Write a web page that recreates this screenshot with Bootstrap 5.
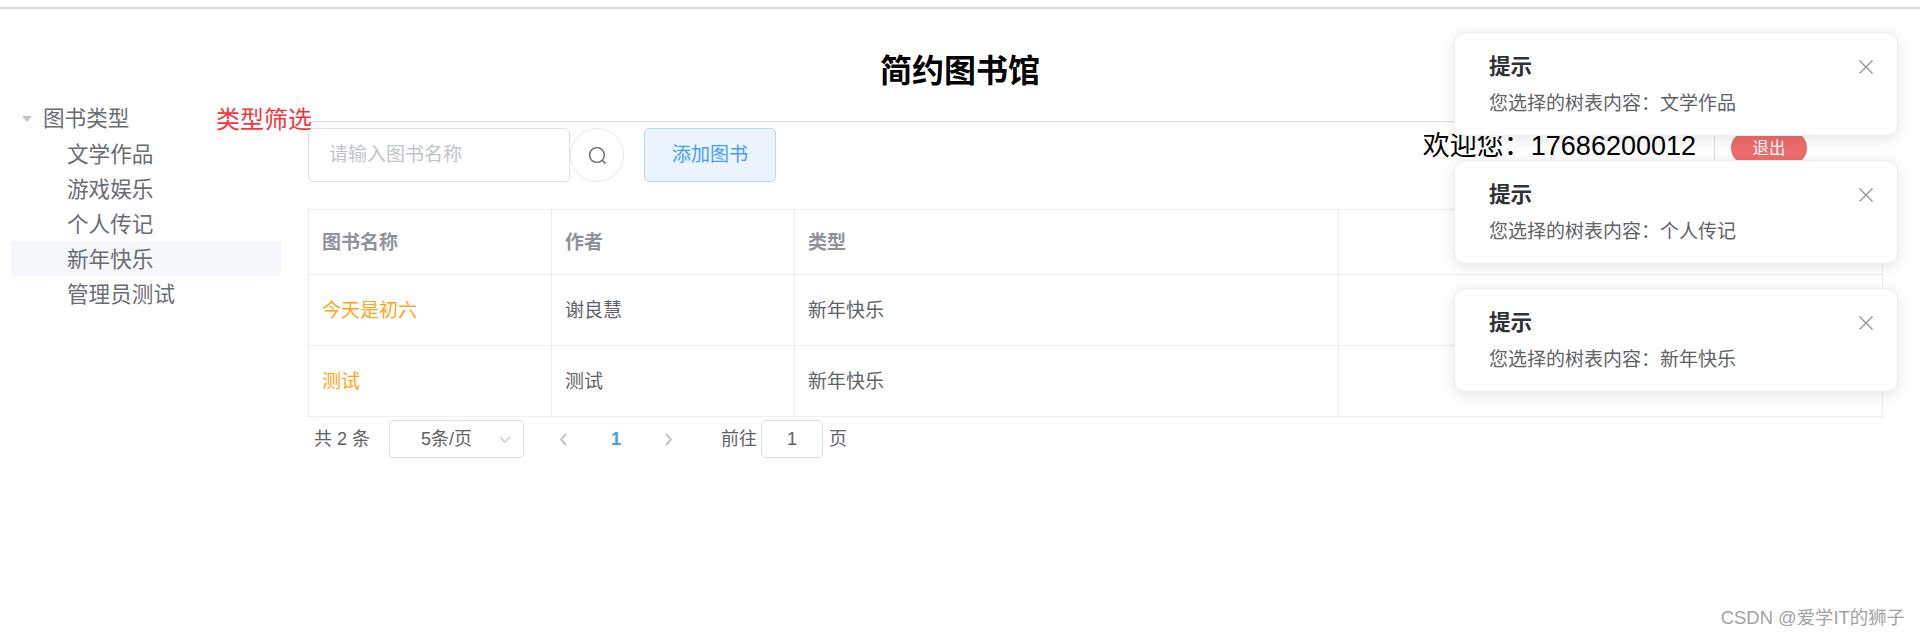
<!doctype html>
<html lang="zh-CN">
<head>
<meta charset="utf-8">
<title>简约图书馆</title>
<link href="https://cdn.jsdelivr.net/npm/bootstrap@5.3.0/dist/css/bootstrap.min.css" rel="stylesheet">
<style>
html,body{height:100%}
body{font-family:"Liberation Sans","Noto Sans CJK SC",sans-serif;color:#606266;background:#fff;font-size:19px}
.shell{position:relative;min-height:638px;overflow:hidden;padding-top:7px}
.top-rule{height:2px;background:#dcdcdc}
.site-title{height:92px;margin:0;padding-top:46px;font-size:32px;line-height:32px;font-weight:700;color:#000;text-align:center}
.side-col{flex:0 0 308px;width:308px;padding-left:11px}
.tree-head{height:35px;width:297px;font-size:21.6px;color:#6a6d73;padding-top:2px}
.tree-caret{margin-left:11px;margin-right:11px;flex:none;margin-top:-2px}
.tree-label{flex:none;width:86px;white-space:nowrap}
.tree-note{flex:none;margin-left:87px;font-size:24px;color:#f9333c;white-space:nowrap}
.tree-list{width:270px;margin:0;padding:0;list-style:none;font-size:21.6px}
.tree-list li{height:35px;line-height:37px;padding-left:56px;color:#6a6d73;white-space:nowrap}
.tree-list li.is-current{background:#f5f7fa}
.main-col{flex:1 1 0;min-width:0;padding-top:20px;padding-right:38px}
.head-rule{height:1px;background:#dcdfe6;margin-bottom:6px}
.tool-row{height:54px}
.search-box.form-control{width:262px;height:54px;padding:0 20px;border:1px solid #dcdfe6;border-radius:5px;font-size:19px;color:#606266;box-shadow:none}
.search-box::placeholder{color:#c0c4cc;opacity:1}
.search-btn.btn{width:54px;height:54px;margin-left:0;padding:0;border:1px solid #e4e7ed;border-radius:50%;background:#fff}
.add-btn.btn{width:132px;height:54px;margin-left:20px;padding:0;border:1px solid #b3d8ff;border-radius:5px;background:#ecf5ff;color:#409eff;font-size:19px}
.welcome-box{margin-left:auto;margin-right:75px;height:38px}
.welcome-text{font-size:27px;line-height:36px;color:#000;white-space:nowrap}
.welcome-split{width:1px;height:34px;margin:3px 16px 0 18px;background:#dcdfe6}
.quit-btn.btn{width:76px;height:34px;margin-top:3px;padding:0;border:0;border-radius:17px;background:#f06c6c;color:#fff;font-size:16.5px;line-height:34px}
.book-table.table{width:100%;margin:27px 0 0;table-layout:fixed;border-collapse:collapse;--bs-table-color:#606266;--bs-table-border-color:#ebeef5;font-size:19px}
.book-table.table>*>*>*{padding:2px 13px 0;border:1px solid #ebeef5;vertical-align:middle;box-shadow:none}
.book-table thead th{height:65px;font-weight:700;color:#909399}
.book-table tbody td{height:71px}
.w-name{width:243px}
.w-type{width:544px}
.book-table.table>tbody>tr>td.book-link{color:#ffa517}
.pager-row{height:38px;margin-top:3px;padding-left:6px;font-size:18px;color:#606266}
.pager-select{width:135px;height:38px;margin-left:19px;padding-left:31px;padding-right:12px;border:1px solid #dcdfe6;border-radius:4px}
.pager-prev{margin-left:35px}
.pager-num{width:94px;text-align:center;color:#409eff;font-weight:700;margin:0 2px}
.pager-goto{margin-left:48px}
.pager-input.form-control{width:62px;height:38px;margin:0 6px 0 4px;padding:0;border:1px solid #dcdfe6;border-radius:5px;text-align:center;font-size:18px;color:#606266;box-shadow:none}
.note-stack{top:32px;right:22px;width:444px;z-index:5}
.note-card.toast{width:444px;height:104px;padding:0 34px;border:1px solid #ebeef5;border-radius:11px;background:#fff;box-shadow:0 3px 16px rgba(0,0,0,.1);--bs-toast-zindex:5}
.note-title{margin:20px 0 0;font-size:21.6px;line-height:28px;font-weight:700;color:#303133}
.note-body{margin-top:10px;font-size:19px;line-height:26px;color:#606266;white-space:nowrap}
.note-close{top:27px;right:24px;width:14px;height:14px;padding:0;border:0;background:none;line-height:0}
.watermark{right:15px;bottom:9px;font-size:18.4px;line-height:22px;color:#a3a3a3;white-space:nowrap}
</style>
</head>
<body>
<div class="shell">
  <div class="top-rule"></div>
  <h1 class="site-title">简约图书馆</h1>
  <div class="d-flex">
    <aside class="side-col">
      <div class="tree-head d-flex align-items-center">
        <svg class="tree-caret" width="10" height="6" viewBox="0 0 10 6"><path d="M0 0h10L5 6z" fill="#c0c4cc"/></svg>
        <span class="tree-label">图书类型</span>
        <span class="tree-note">类型筛选</span>
      </div>
      <ul class="tree-list">
        <li>文学作品</li>
        <li>游戏娱乐</li>
        <li>个人传记</li>
        <li class="is-current">新年快乐</li>
        <li>管理员测试</li>
      </ul>
    </aside>
    <main class="main-col">
      <div class="head-rule"></div>
      <div class="tool-row d-flex align-items-start">
        <input class="search-box form-control" type="text" placeholder="请输入图书名称">
        <button class="search-btn btn d-flex align-items-center justify-content-center" type="button" aria-label="搜索">
          <svg width="19" height="19" viewBox="0 0 17 17" fill="none" stroke="#606266" stroke-width="1.2" stroke-linecap="round"><circle cx="8" cy="8" r="6.6"/><path d="M12.8 12.8l2.6 2.6"/></svg>
        </button>
        <button class="add-btn btn" type="button">添加图书</button>
        <div class="welcome-box d-flex align-items-start">
          <span class="welcome-text">欢迎您：17686200012</span>
          <span class="welcome-split"></span>
          <button class="quit-btn btn" type="button">退出</button>
        </div>
      </div>
      <table class="book-table table">
        <colgroup><col class="w-name"><col class="w-name"><col class="w-type"><col class="w-type"></colgroup>
        <thead>
          <tr><th>图书名称</th><th>作者</th><th>类型</th><th></th></tr>
        </thead>
        <tbody>
          <tr><td class="book-link">今天是初六</td><td>谢良慧</td><td>新年快乐</td><td></td></tr>
          <tr><td class="book-link">测试</td><td>测试</td><td>新年快乐</td><td></td></tr>
        </tbody>
      </table>
      <div class="pager-row d-flex align-items-center">
        <span>共 2 条</span>
        <div class="pager-select d-flex align-items-center justify-content-between">
          <span>5条/页</span>
          <svg width="12" height="7" viewBox="0 0 12 7" fill="none" stroke="#c0c4cc" stroke-width="1.2"><path d="M1 1l5 5 5-5"/></svg>
        </div>
        <svg class="pager-prev" width="8" height="13" viewBox="0 0 8 13" fill="none" stroke="#c0c4cc" stroke-width="2"><path d="M7 1L2 6.5 7 12"/></svg>
        <span class="pager-num">1</span>
        <svg width="8" height="13" viewBox="0 0 8 13" fill="none" stroke="#c0c4cc" stroke-width="2"><path d="M1 1l5 5.5L1 12"/></svg>
        <span class="pager-goto">前往</span>
        <input class="pager-input form-control" type="text" value="1">
        <span>页</span>
      </div>
    </main>
  </div>

  <div class="note-stack position-absolute d-flex flex-column gap-4">
    <div class="note-card toast show position-relative">
      <p class="note-title">提示</p>
      <div class="note-body">您选择的树表内容：文学作品</div>
      <button class="note-close position-absolute" type="button" aria-label="关闭"><svg width="14" height="14" viewBox="0 0 14 14" fill="none" stroke="#909399" stroke-width="1.3"><path d="M.5.5l13 13M13.5.5l-13 13"/></svg></button>
    </div>
    <div class="note-card toast show position-relative">
      <p class="note-title">提示</p>
      <div class="note-body">您选择的树表内容：个人传记</div>
      <button class="note-close position-absolute" type="button" aria-label="关闭"><svg width="14" height="14" viewBox="0 0 14 14" fill="none" stroke="#909399" stroke-width="1.3"><path d="M.5.5l13 13M13.5.5l-13 13"/></svg></button>
    </div>
    <div class="note-card toast show position-relative">
      <p class="note-title">提示</p>
      <div class="note-body">您选择的树表内容：新年快乐</div>
      <button class="note-close position-absolute" type="button" aria-label="关闭"><svg width="14" height="14" viewBox="0 0 14 14" fill="none" stroke="#909399" stroke-width="1.3"><path d="M.5.5l13 13M13.5.5l-13 13"/></svg></button>
    </div>
  </div>
  <div class="watermark position-absolute">CSDN @爱学IT的狮子</div>
</div>
<script src="https://cdn.jsdelivr.net/npm/bootstrap@5.3.0/dist/js/bootstrap.bundle.min.js"></script>
</body>
</html>
